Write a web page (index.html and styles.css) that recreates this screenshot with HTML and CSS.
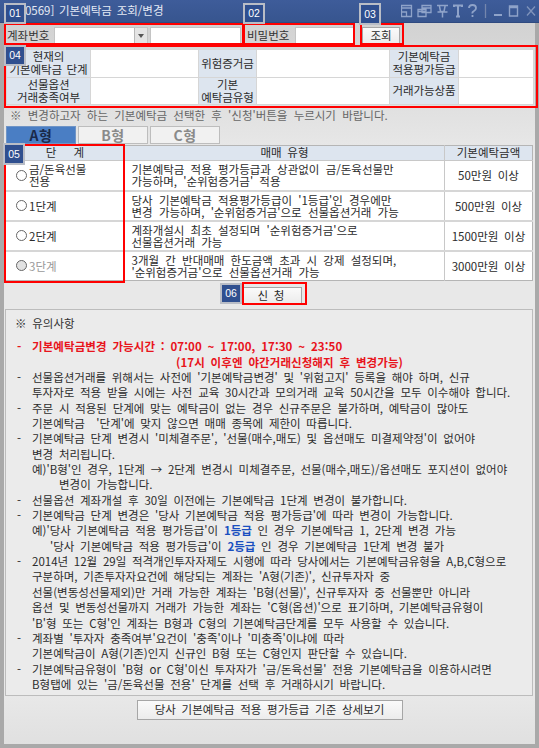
FILE: index.html
```html
<!DOCTYPE html>
<html lang="ko">
<head>
<meta charset="utf-8">
<title>기본예탁금 조회/변경</title>
<link rel="stylesheet" href="styles.css">
</head>
<body>
<div class="window">
  <header class="titlebar">
    <span class="title">[0569] 기본예탁금 조회/변경</span>
    <div class="tools">
      <svg width="135" height="16" viewBox="0 0 135 16" fill="none" stroke="#8fa3c9" stroke-width="1.3">
        <path d="M0.5 2.5h10v11h-10zM0.5 5h10M0.5 9h5v4.500"/>
        <path d="M21 2.500h9v7h-9zM21 5h9M17 6.500h8v7h-8zM17 8.500h8"/>
        <path d="M36 2.500h11M38.500 2.500v1l1 5h3.500l1-5v-1M36.500 9h10M41.500 9v5.500" stroke-width="1.500"/>
        <path d="M53 4v-1.500h8v1.500M57 2.500v11M55 13.500h4" stroke-width="2"/>
        <path d="M68 5q0-3 3.500-3t3.500 3q0 2-2 3t-1.500 2.500M71.500 12v2" stroke-width="1.800"/>
        <path d="M84.500 1v14" stroke="#7486ad"/>
        <path d="M93 12h8" stroke-width="2"/>
        <path d="M108.500 3h8v10h-8zM108.500 4.500h8" stroke-width="1.400"/>
        <path d="M126 3.500l8 9M134 3.500l-8 9" stroke="#7f93bb"/>
      </svg>
    </div>
  </header>
  <main class="body">
    <div class="filters">
      <label class="filter-label">계좌번호</label>
      <div class="combo"><span class="combo-arrow"></span></div>
      <div class="field field-name"></div>
      <label class="filter-label label-pw">비밀번호</label>
      <div class="field field-pw"></div>
      <button class="btn btn-query">조회</button>
    </div>

    <table class="info">
      <colgroup><col class="i1"><col class="i2"><col class="i3"><col class="i4"><col class="i5"><col></colgroup>
      <tr>
        <th>현재의<br>기본예탁금 단계</th><td></td>
        <th>위험증거금</th><td></td>
        <th>기본예탁금<br>적용평가등급</th><td></td>
      </tr>
      <tr>
        <th>선물옵션<br>거래충족여부</th><td></td>
        <th>기본<br>예탁금유형</th><td></td>
        <th>거래가능상품</th><td></td>
      </tr>
    </table>

    <p class="hint">※ 변경하고자 하는 기본예탁금 선택한 후 '신청'버튼을 누르시기 바랍니다.</p>

    <div class="tabs">
      <div class="tab tab-on">A형</div>
      <div class="tab">B형</div>
      <div class="tab">C형</div>
    </div>

    <table class="levels">
      <colgroup><col class="l1"><col class="l2"><col class="l3"></colgroup>
      <tr><th>단&nbsp;&nbsp;&nbsp;계</th><th>매매 유형</th><th>기본예탁금액</th></tr>
      <tr>
        <td><div class="choice"><span class="radio"></span><span>금/돈육선물<br>전용</span></div></td>
        <td class="desc">기본예탁금 적용 평가등급과 상관없이 금/돈육선물만<br>가능하며, '순위험증거금' 적용</td>
        <td class="amt">50만원 이상</td>
      </tr>
      <tr>
        <td><div class="choice"><span class="radio"></span><span>1단계</span></div></td>
        <td class="desc">당사 기본예탁금 적용평가등급이 '1등급'인 경우에만<br>변경 가능하며, '순위험증거금'으로 선물옵션거래 가능</td>
        <td class="amt">500만원 이상</td>
      </tr>
      <tr>
        <td><div class="choice"><span class="radio"></span><span>2단계</span></div></td>
        <td class="desc">계좌개설시 최초 설정되며 '순위험증거금'으로<br>선물옵션거래 가능</td>
        <td class="amt">1500만원 이상</td>
      </tr>
      <tr>
        <td><div class="choice choice-off"><span class="radio"></span><span>3단계</span></div></td>
        <td class="desc">3개월 간 반대매매 한도금액 초과 시 강제 설정되며,<br>'순위험증거금'으로 선물옵션거래 가능</td>
        <td class="amt">3000만원 이상</td>
      </tr>
    </table>

    <div class="apply"><button class="btn btn-apply">신 청</button></div>

    <section class="notes">
      <div class="notes-head">※ 유의사항</div>
      <div class="red"><span class="dash">-</span>기본예탁금변경 가능시간 : 07:00 ~ 17:00, 17:30 ~ 23:50</div>
      <div class="red red-2">(17시 이후엔 야간거래신청해지 후 변경가능)</div>
      <div class="ln"><span class="dash">-</span>선물옵션거래를 위해서는 사전에 '기본예탁금변경' 및 '위험고지' 등록을 해야 하며, 신규</div>
      <div class="ln">투자자로 적용 받을 시에는 사전 교육 30시간과 모의거래 교육 50시간을 모두 이수해야 합니다.</div>
      <div class="ln"><span class="dash">-</span>주문 시 적용된 단계에 맞는 예탁금이 없는 경우 신규주문은 불가하며, 예탁금이 많아도</div>
      <div class="ln">기본예탁금 &nbsp;'단계'에 맞지 않으면 매매 종목에 제한이 따릅니다.</div>
      <div class="ln"><span class="dash">-</span>기본예탁금 단계 변경시 '미체결주문', '선물(매수,매도) 및 옵션매도 미결제약정'이 없어야</div>
      <div class="ln">변경 처리됩니다.</div>
      <div class="ln">예)'B형'인 경우, 1단계 → 2단계 변경시 미체결주문, 선물(매수,매도)/옵션매도 포지션이 없어야</div>
      <div class="ln ind-2">변경이 가능합니다.</div>
      <div class="ln"><span class="dash">-</span>선물옵션 계좌개설 후 30일 이전에는 기본예탁금 1단계 변경이 불가합니다.</div>
      <div class="ln"><span class="dash">-</span>기본예탁금 단계 변경은 '당사 기본예탁금 적용 평가등급'에 따라 변경이 가능합니다.</div>
      <div class="ln">예)'당사 기본예탁금 적용 평가등급'이 <b class="blue">1등급</b> 인 경우 기본예탁금 1, 2단계 변경 가능</div>
      <div class="ln ind-1">'당사 기본예탁금 적용 평가등급'이 <b class="blue">2등급</b> 인 경우 기본예탁금 1단계 변경 불가</div>
      <div class="ln"><span class="dash">-</span>2014년 12월 29일 적격개인투자자제도 시행에 따라 당사에서는 기본예탁금유형을 A,B,C형으로</div>
      <div class="ln">구분하며, 기존투자자요건에 해당되는 계좌는 'A형(기존)', 신규투자자 중</div>
      <div class="ln">선물(변동성선물제외)만 거래 가능한 계좌는 'B형(선물)', 신규투자자 중 선물뿐만 아니라</div>
      <div class="ln">옵션 및 변동성선물까지 거래가 가능한 계좌는 'C형(옵션)'으로 표기하며, 기본예탁금유형이</div>
      <div class="ln">'B'형 또는 C형'인 계좌는 B형과 C형의 기본예탁금단계를 모두 사용할 수 있습니다.</div>
      <div class="ln"><span class="dash">-</span>계좌별 '투자자 충족여부'요건이 '충족'이나 '미충족'이냐에 따라</div>
      <div class="ln">기본예탁금이 A형(기존)인지 신규인 B형 또는 C형인지 판단할 수 있습니다.</div>
      <div class="ln"><span class="dash">-</span>기본예탁금유형이 'B형 or C형'이신 투자자가 '금/돈육선물' 전용 기본예탁금을 이용하시려면</div>
      <div class="ln">B형탭에 있는 '금/돈육선물 전용' 단계를 선택 후 거래하시기 바랍니다.</div>
    </section>

    <div class="footer"><button class="btn btn-detail">당사 기본예탁금 적용 평가등급 기준 상세보기</button></div>
  </main>

  <div class="frame f1"></div>
  <div class="frame f2"></div>
  <div class="frame f3"></div>
  <div class="frame f4"></div>
  <div class="frame f5"></div>
  <div class="frame f6"></div>
  <span class="badge b1">01</span>
  <span class="badge b2">02</span>
  <span class="badge b3">03</span>
  <span class="badge b4">04</span>
  <span class="badge b5">05</span>
  <span class="badge b6">06</span>
</div>
</body>
</html>
```

FILE: styles.css
```css
* { box-sizing: border-box; }
html, body { margin: 0; padding: 0; }
body {
  width: 539px;
  height: 748px;
  overflow: hidden;
  font-family: "Noto Sans CJK KR", "Liberation Sans", sans-serif;
  font-size: 11.5px;
  line-height: 1;
  word-spacing: 2.5px;
  color: #2b2b2b;
}
.window {
  position: relative;
  width: 539px;
  height: 748px;
  display: flex;
  flex-direction: column;
  background: #e4e4e4;
}

/* title bar */
.titlebar {
  height: 23px;
  flex: none;
  display: flex;
  align-items: center;
  justify-content: space-between;
  background: linear-gradient(#3e5c9a, #37558f);
  border-bottom: 1px solid #2f4a80;
  padding-left: 21px;
  color: #e4e9f4;
}
.title { white-space: nowrap; word-spacing: 1.5px; }
.tools { display: flex; padding-right: 3px; }

/* body */
.body {
  flex: 1;
  display: flex;
  flex-direction: column;
  min-height: 0;
  border: solid #a9a9a9;
  border-width: 0 4px 4px;
  padding: 0 2px 0 1px;
  background: linear-gradient(#d2d2d2 0, #dcdcdc 60px, #e8e8e8 130px);
}

/* filter row */
.filters {
  display: flex;
  align-items: center;
  height: 23px;
  flex: none;
  padding-top: 2px;
}
.filter-label { white-space: nowrap; color: #333; width: 49px; padding-left: 2px; }
.combo {
  position: relative;
  width: 94px;
  height: 17px;
  background: #fff;
  border: 1px solid #c4c4c4;
}
.combo-arrow {
  position: absolute;
  right: 0;
  top: 0;
  bottom: 0;
  width: 13px;
  background: #e4e4e4;
  border-left: 1px solid #b8b8b8;
}
.combo-arrow::after {
  content: "";
  position: absolute;
  left: 3px;
  top: 6px;
  border: 3.500px solid transparent;
  border-top: 4px solid #555;
  border-bottom: 0;
}
.field { height: 17px; background: #fff; border: 1px solid #c4c4c4; }
.field-name { width: 91px; margin-left: 2px; }
.label-pw { margin-left: 4px; width: 50px; }
.field-pw { width: 59px; }
.btn {
  font: inherit;
  word-spacing: inherit;
  color: #2b2b2b;
  background: linear-gradient(#fafafa, #ececec);
  border: 1px solid #a6a6a6;
  padding: 0;
}
.btn-query { width: 38px; height: 17px; margin-left: 8px; }

/* info table */
.info, .levels {
  border-collapse: collapse;
  table-layout: fixed;
  background: #fff;
  flex: none;
}
.info {
  width: 528px;
  height: 56px;
  margin: 3px 0 0 1px;
  border: 1px solid #c2c2c2;
}
.i1 { width: 84px; }
.i2 { width: 108px; }
.i3 { width: 58px; }
.i4 { width: 133px; }
.i5 { width: 69px; }
.info th, .info td { border: 1px solid #d6d6d6; padding: 0; }
.info th {
  background: #dde5ef;
  font-weight: 400;
  line-height: 13px;
  white-space: nowrap;
  letter-spacing: -.1px;
  word-spacing: 1.500px;
}

/* hint */
.hint {
  margin: 2px 0 0 5px;
  height: 16px;
  line-height: 16px;
  flex: none;
  color: #666;
  white-space: nowrap;
  word-spacing: 3px;
}

/* tabs */
.tabs { display: flex; gap: 2px; margin: 3px 0 0 1px; height: 18px; flex: none; }
.tab {
  width: 70px;
  display: flex;
  align-items: center;
  justify-content: center;
  background: #f1f1f1;
  border: 1px solid #bdbdbd;
  color: #8a8a8a;
  font-size: 14px;
  letter-spacing: .5px;
  font-weight: 700;
}
.tab-on { background: #4a7ec4; color: #1a2a4a; border-color: #6f94c6; }

/* levels table */
.levels {
  width: 528px;
  height: 134px;
  margin-top: 1px;
  border: 1px solid #b5b5b5;
}
.l1 { width: 119px; }
.l2 { width: 320px; }
.levels th {
  height: 15px;
  padding: 0;
  background: #dde5ef;
  font-weight: 400;
  border-bottom: 1px solid #c8c8c8;
  border-left: 1px solid #c8c8c8;
}
.levels td {
  height: 30px;
  padding: 0;
  border-bottom: 2px solid #d6d6d6;
  line-height: 12px;
  white-space: nowrap;
}
.levels tr:last-child td { border-bottom: 0; }
.levels th:first-child { border-left: 0; }
.choice { display: flex; align-items: center; gap: 2px; padding-left: 10px; }
.choice-off { color: #999; }
.choice-off .radio { background: #e2e2e2; }
.radio {
  flex: none;
  width: 11px;
  height: 11px;
  border: 1px solid #666;
  border-radius: 50%;
  background: #fff;
}
.desc { padding-left: 7px !important; word-spacing: 3px; }
.amt { text-align: center; border-left: 1px solid #c8c8c8; }

/* apply */
.apply { display: flex; justify-content: center; height: 28px; flex: none; padding: 6px 0 0 0; margin-left: 5px; }
.btn-apply { width: 62px; height: 17px; margin-left: -1px; }

/* notes */
.notes {
  flex: none;
  height: 387px;
  background: #ebebeb;
  border: 1px solid #bcbcbc;
  padding: 7px 0 0 26px;
  white-space: nowrap;
}
.notes-head { margin-left: -17px; height: 21px; line-height: 12px; color: #333; }
.dash { position: absolute; margin-left: -15px; }
.red, .ln { height: 15.35px; line-height: 15.35px; }
.red { color: #e8141c; font-weight: 700; height: 16px; line-height: 16px; letter-spacing: .08px; }
.red-2 { margin-left: 144px; }
.ind-1 { padding-left: 18px; }
.ind-2 { padding-left: 27px; }
.blue { color: #1a4fc0; }

/* footer */
.footer {
  flex: 1;
  display: flex;
  justify-content: center;
  padding-top: 4px;
  background: linear-gradient(#e8e8e8, #e0e0e0);
  margin: 0 -2px 0 -1px;
}
.btn-detail { width: 266px; height: 20px; }

/* overlays: annotation frames and number badges */
.frame { position: absolute; border: 2px solid #f00; pointer-events: none; }
.f1 { left: 4px; top: 23px; width: 240px; height: 22px; }
.f2 { left: 243px; top: 23px; width: 112px; height: 22px; }
.f3 { left: 360px; top: 23px; width: 44px; height: 22px; }
.f4 { left: 4px; top: 45px; width: 534px; height: 63px; }
.f5 { left: 4px; top: 144px; width: 121px; height: 139px; }
.f6 { left: 242px; top: 282px; width: 65px; height: 23px; }
.badge {
  position: absolute;
  display: flex;
  align-items: center;
  justify-content: center;
  width: 22px;
  height: 21px;
  background: #2f4f8f;
  border: 2px solid #b9bdc6;
  color: #fff;
  font-family: "Liberation Sans", sans-serif;
  font-size: 10.500px;
}
.b1 { left: 4px; top: 3px; }
.b2 { left: 243px; top: 3px; }
.b3 { left: 359px; top: 3px; height: 22px; }
.b4 { left: 4px; top: 45px; }
.b5 { left: 3px; top: 143px; height: 22px; }
.b6 { left: 220px; top: 283px; }
```
